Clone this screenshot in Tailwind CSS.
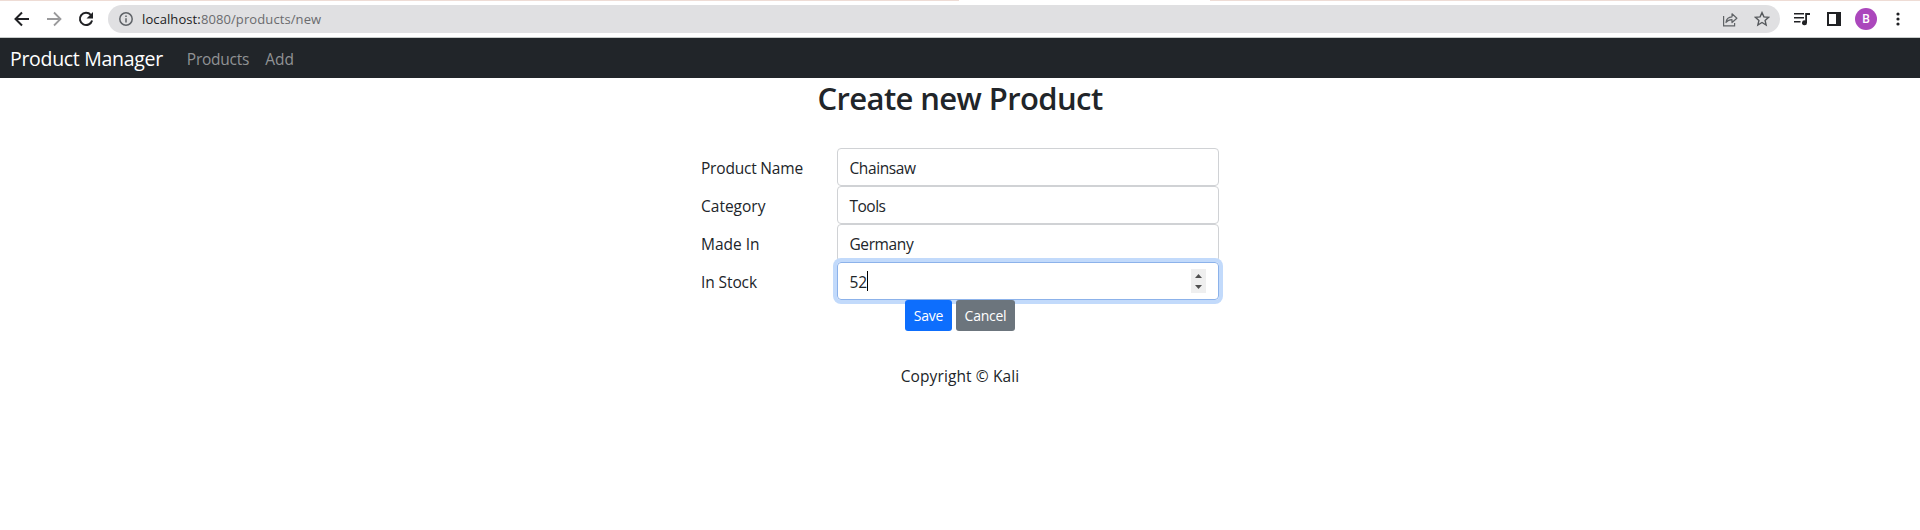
<!DOCTYPE html>
<html lang="en">
<head>
<meta charset="utf-8">
<title>Create new Product</title>
<script src="https://cdn.jsdelivr.net/npm/@tailwindcss/browser@4"></script>
</head>
<body class="h-[530px] overflow-hidden bg-white font-['Open_Sans','Noto_Sans',sans-serif] text-[15.5px] leading-6 text-[#212529]">
<header class="flex h-[38px] flex-col border-b border-[#c8cccb]">
  <div class="flex h-px shrink-0 justify-between bg-white"><div class="w-[959px] bg-[#eedcd5]"></div><div class="w-[710px] bg-[#eedcd5]"></div></div>
  <div class="flex h-9 items-center">
    <svg class="ml-[12px] size-5 shrink-0" viewBox="0 0 20 20" fill="none" stroke="#202124" stroke-width="2"><path d="M17 10H4M10 3.5L3.5 10l6.500 6.500"/></svg>
    <svg class="ml-[12px] size-5 shrink-0" viewBox="0 0 20 20" fill="none" stroke="#9a9a9c" stroke-width="1.800"><path d="M3 10h13M10 3.500l6.500 6.500-6.500 6.500"/></svg>
    <svg class="ml-[12px] size-5 shrink-0" viewBox="0 0 20 20"><path d="M14.800 5.800A6.200 6.200 0 1 0 16.100 11.500" fill="none" stroke="#202124" stroke-width="2"/><path d="M17 3v6.500h-6.500z" fill="#202124"/></svg>
    <div class="ml-[12px] flex h-7 w-[1672px] items-center rounded-full bg-[#e0e0e2]">
      <svg class="ml-[11px] size-[14px] shrink-0" viewBox="0 0 14 14"><circle cx="7" cy="7" r="6.200" fill="none" stroke="#5f6368" stroke-width="1.500"/><path d="M7 6.200v4.300M7 3.500v1.500" stroke="#5f6368" stroke-width="1.500"/></svg>
      <span class="ml-[9px] text-[13px] leading-5 tracking-[0.1px] text-[#6a6b6e]"><span class="text-[#202124]">localhost:</span>8080/products/new</span>
      <svg class="ml-auto h-[15px] w-4 shrink-0" viewBox="0 0 16 15" fill="none" stroke="#606367" stroke-width="1.200"><path d="M1.600 4v9.900h11V11"/><path d="M4 10.500c.4-3.800 2.500-5.600 6-5.700V1.800L14.900 6.200 10 10.500V7.700c-2.800 0-4.500.8-6 2.800z" stroke-linejoin="round"/></svg>
      <svg class="mr-[10px] ml-[16px] size-4 shrink-0" viewBox="0 0 15 15"><path d="M7.500 1.500l1.800 4 4.400.4-3.300 2.900 1 4.300-3.900-2.300-3.900 2.300 1-4.300L1.300 5.900l4.400-.4z" fill="none" stroke="#55585c" stroke-width="1.300"/></svg>
    </div>
    <svg class="ml-[14px] h-[13px] w-4 shrink-0" viewBox="0 0 16 13" fill="#202124"><path d="M0 0h10v1.600H0zM0 4h10v1.600H0zM0 8h6.500v1.600H0zM11.200 0H16v2h-3v7.800a2.500 2.500 0 1 1-1.800-2.400z"/></svg>
    <svg class="ml-[17px] h-[14px] w-[14px] shrink-0" viewBox="0 0 14 14"><path d="M0 0h14v14H0z" fill="#202124"/><path d="M2 2h7v10H2z" fill="#fff"/></svg>
    <div class="ml-[14px] flex size-[22px] shrink-0 items-center justify-center rounded-full bg-[#ab47bc] font-[Roboto] text-[12px] font-medium text-white">B</div>
    <svg class="ml-[19px] h-[14px] w-1 shrink-0" viewBox="0 0 4 14" fill="#202124"><circle cx="2" cy="2" r="1.600"/><circle cx="2" cy="7" r="1.600"/><circle cx="2" cy="12" r="1.600"/></svg>
  </div>
</header>
<nav class="flex h-10 items-center bg-[#212529] pt-0.5 pl-[10px] whitespace-nowrap">
  <a class="text-[19.5px] leading-[30px] tracking-[-0.3px] text-white">Product Manager</a>
  <a class="ml-6 tracking-[-0.25px] text-[#909294]">Products</a>
  <a class="ml-4 text-[#909294]">Add</a>
</nav>
<main class="flex flex-col items-center">
  <h1 class="mt-px text-[31px] leading-[38px] font-semibold tracking-[-0.6px]">Create new Product</h1>
  <form class="mt-[31px] grid w-[518px] grid-cols-[136px_382px] whitespace-nowrap">
    <label class="flex h-[38px] items-center pt-0.5 tracking-[-0.2px]">Product Name</label>
    <div class="flex h-[38px] items-center rounded border border-[#d0d2d5] px-[11.5px] pt-0.5 tracking-[-0.4px]">Chainsaw</div>
    <label class="flex h-[38px] items-center pt-0.5">Category</label>
    <div class="flex h-[38px] items-center rounded border border-[#d0d2d5] px-[11.5px] pt-0.5 tracking-[-0.5px]">Tools</div>
    <label class="flex h-[38px] items-center pt-0.5">Made In</label>
    <div class="flex h-[38px] items-center rounded border border-[#d0d2d5] px-[11.5px] pt-0.5 tracking-[-0.4px]">Germany</div>
    <label class="flex h-[38px] items-center pt-0.5 tracking-[-0.1px]">In Stock</label>
    <div class="flex h-[38px] items-center rounded border border-[#8cb2ea] pr-3 pl-[11.5px] ring-4 ring-[#c2dafb]"><span class="pt-0.5 tracking-[-0.2px]">52</span><span class="h-5 w-px bg-black"></span>
      <svg class="ml-auto h-6 w-[15px]" viewBox="0 0 15 24"><path d="M0 0h15v24H0z" fill="#efefef"/><path d="M4 9l3.500-4L11 9zM4 16l3.500 4 3.500-4z" fill="#505050"/></svg></div>
  </form>
  <div class="relative flex gap-1 text-[14px] leading-[21px] tracking-[-0.25px] text-white">
    <button class="flex h-[31px] w-[47px] items-center justify-center rounded-[3px] bg-[#0d6efd]">Save</button>
    <button class="flex h-[31px] w-[59px] items-center justify-center rounded-[3px] bg-[#6c757d]">Cancel</button>
  </div>
  <footer class="mt-[33px] tracking-[0.1px]">Copyright © Kali</footer>
</main>
</body>
</html>
